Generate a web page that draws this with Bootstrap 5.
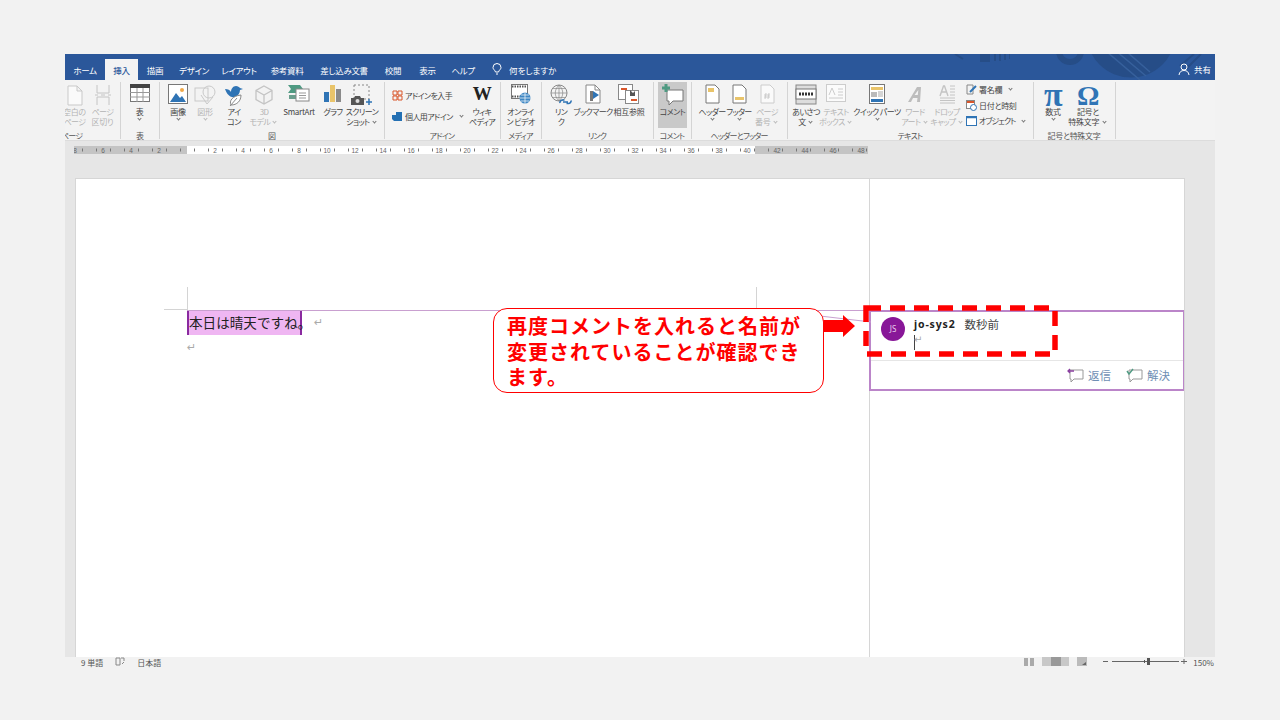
<!DOCTYPE html>
<html lang="ja">
<head>
<meta charset="utf-8">
<title>Word コメント</title>
<link href="https://cdn.jsdelivr.net/npm/bootstrap@5.3.0/dist/css/bootstrap.min.css" rel="stylesheet">
<style>
html,body{height:720px;overflow:hidden}
body{background:#f2f2f2;font-family:"Noto Sans CJK JP","Noto Sans",sans-serif;color:#444;font-feature-settings:"palt"}
svg{display:block;flex:none}
.wd-win{position:relative;width:1150px;height:614px;margin:54px 0 0 65px;overflow:hidden}
.wd-tabs{position:relative;height:26px;background:#2b579a;overflow:hidden}
.wd-deco{position:absolute;left:0;top:0}
.wd-tab{position:relative;height:21px;line-height:22px;font-size:8.5px;letter-spacing:-.35px;color:#fff;text-align:center;flex:none}
.wd-tab.on{background:#f3f3f3;color:#2b579a;font-weight:500}
.t40{width:40px}.t33{width:33px}.t34{width:34px}.t44{width:44px}.t46{width:46px}.t50{width:50px}.t64{width:64px}.t35{width:35px}.t36{width:36px}
.wd-help{padding-left:11px;gap:7px;letter-spacing:0}
.wd-share{position:relative;color:#fff;font-size:8.5px;height:21px;padding-right:4px}
.wd-ribbon{height:61px;background:#f3f3f3;padding-top:2px;border-bottom:1px solid #dcdcdc}
.rb-grp{height:57px;box-shadow:1px 0 0 #d4d4d4;flex:none;position:relative}
.rb-items{height:49px}
.rb-cap{height:8px;line-height:10px;font-size:8px;letter-spacing:-.8px;text-align:center;color:#555;white-space:nowrap}
.rb-it{flex:none;height:49px;font-size:8px;letter-spacing:-.6px;line-height:10px;white-space:nowrap;padding-top:2px;color:#444}
.rb-it .ic{height:23px;display:flex;justify-content:center;align-items:flex-start}
.kj,.rb-it .kj{letter-spacing:-.3px}
.kn2{letter-spacing:-.95px}
.off{color:#b4b4b4}
.chev{display:inline-block;width:3px;height:3px;border:solid #777;border-width:0 1px 1px 0;transform:rotate(45deg);margin:0 2px 2px}
.off .chev{border-color:#bbb}
.rb-row{font-size:8px;letter-spacing:-.6px;line-height:10px;white-space:nowrap;color:#444;gap:2px}
.rb-row .chev{margin-left:5px}
.g55{width:55px}.g39{width:39px}.g225{width:225px;padding-left:7px}.g116{width:116px;padding-left:8px}.g41{width:41px}.g112{width:112px;padding-left:8px}.g38{width:38px}.g96{width:96px;padding-left:7px}.g246{width:246px}.g82{width:82px;padding-left:7px}
.w12{width:12px}.w16{width:16px}.w22{width:22px}.w23{width:23px}.w24{width:24px}.w25{width:25px}.w26{width:26px}.w28{width:28px}.w29{width:29px}.w30{width:30px}.w32{width:32px}.w38{width:38px}.w39{width:39px}.w40{width:40px}.w41{width:41px}.w44{width:44px}.w60{width:60px}.w78{width:78px}.w67{width:67px}
.ml8{margin-left:8px}.ml3{margin-left:3px}.ml5{margin-left:5px}.mln2{margin-left:-2px}
.pg-clip{overflow:hidden}
.pg-cap{margin-left:-4px}
.rows-a{padding-top:8px;gap:10px}
.rows-b{padding-top:2px;gap:5px}
.cm-on{background:#c9c9c9;height:46px}
.wd-wiki{font:700 19px/20px "Liberation Serif",serif;color:#222}
.wd-sym{font:700 28px/24px "Liberation Serif",serif;color:#2f74b5}
.wd-pi{font-size:34px;line-height:22px}
.wd-doc{height:516px;background:#e6e6e6;overflow:hidden}
.wd-ruler{margin:4px 0 0 9px;height:10px}
.wd-ruler text{font:6.5px "Liberation Sans",sans-serif;fill:#666;text-anchor:middle}
.wd-page{margin:23px 0 0 10px;width:1110px;height:500px;background:#fff;border:1px solid #d6d6d6}
.wd-paper{width:793px;padding:132px 0 0 111px;position:relative;flex:none}
.crop-v,.crop-h{position:absolute;background:#d4d4d4}
.crop-v{width:1px;height:23px;top:108px}
.crop-h{height:1px;width:23px;top:130px;left:88px}
.crop-a{left:111px}.crop-b{left:680px}
.wd-rule{position:absolute;left:111px;right:0;top:131px;height:1px;background:#c9a0d0}
.wd-line{height:24px;line-height:24px;font-size:13.6px;color:#222;font-feature-settings:normal}
.wd-line2{line-height:20px}
.wd-hl{display:inline-block;background:#efb6f2;border:solid #8a2aa0;border-width:0 2px;width:115px;height:24px;white-space:nowrap;line-height:23px}
.wd-ret{color:#aaa;font-size:11px;font-family:"DejaVu Sans",sans-serif;line-height:inherit}
.ret-a{margin-left:12px}
.wd-margin{flex:1;border-left:1px solid #d6d6d6;padding-top:131px}
.cm-card{height:81px;margin-left:-1px;border:2px solid #bb85c9;border-right-width:1px}
.cm-top{height:49px;padding:5px 0 0 10px;border-bottom:1px solid #e6e6e6}
.cm-ava{width:24px;height:24px;border-radius:50%;background:#881798;color:#e8cdec;font:8px/24px "Noto Sans",sans-serif;text-align:center;flex:none}
.cm-name{font:700 10.5px/15px "Noto Sans",sans-serif;color:#222;letter-spacing:.85px;margin-left:9px}
.cm-time{font-size:11.5px;line-height:15px;color:#444;margin-left:9px}
.cm-caret{width:1px;height:15px;background:#444;margin:3px 0 0 9px;position:relative}
.cm-caret span{position:absolute;left:0;top:-3px;color:#aaa;font:10px/15px "DejaVu Sans",sans-serif}
.cm-act{height:29px;padding-right:13px;color:#6f8fb4;font-size:11.5px;gap:15px}
.wd-status{height:12px;font-size:8px;line-height:12px;color:#555;overflow:hidden;padding-right:1px}
.st-gap{margin-left:12px}
.st-pct{margin-left:6px}
.st-on{background:#c8c8c8;width:27px;height:9px}
.note-box{position:absolute;left:428px;top:254px;width:331px;height:85px;background:#fff;border:1px solid #f00;border-radius:14px;padding:4px 0 0 13px;color:#f00;font:700 20px/25.500px "Noto Sans CJK JP",sans-serif;letter-spacing:1px;font-feature-settings:normal;white-space:nowrap}
.note-layer{position:absolute;left:0;top:0;pointer-events:none}
</style>
</head>
<body>
<div class="wd-win">
  <div class="wd-tabs d-flex align-items-end">
    <svg class="wd-deco" width="1150" height="26" fill="none">
      <circle cx="1066" cy="-21" r="44.6" fill="#264d87"/>
      <path d="M1035 -8l40 34M1045 -8l36 30M1055 -8l30 26" stroke="#36609c" stroke-width="1.5"/>
      <circle cx="1005" cy="-3" r="11" stroke="#264d87" stroke-width="6"/>
      <path d="M915 0h10v8h-10zM929 0h2v7h-2zM934 0h2v7h-2zM939 0h2v6h-2zM944 0h1v5h-1z" fill="#264d87"/>
      <path d="M890 0l8 5M1115 12l14-12M1122 14l14-14" stroke="#264d87" stroke-width="2"/>
    </svg>
    <div class="wd-tab t40">ホーム</div><div class="wd-tab t33 on">挿入</div><div class="wd-tab t34">描画</div><div class="wd-tab t44">デザイン</div><div class="wd-tab t46">レイアウト</div><div class="wd-tab t50">参考資料</div><div class="wd-tab t64">差し込み文書</div><div class="wd-tab t34">校閲</div><div class="wd-tab t35">表示</div><div class="wd-tab t36">ヘルプ</div>
    <div class="wd-tab wd-help d-flex align-items-center">
      <svg width="10" height="13" viewBox="0 0 10 13" fill="none" stroke="#fff"><path d="M3.5 9C3 7 1 6.500 1 4.500a4 4 0 0 1 8 0C9 6.500 7 7 6.500 9zM4 11h2"/></svg>
      <span>何をしますか</span>
    </div>
    <div class="wd-share ms-auto d-flex align-items-center gap-1">
      <svg width="12" height="13" viewBox="0 0 12 13" fill="none" stroke="#fff"><circle cx="6" cy="4" r="3"/><path d="M1 12c.5-3 2-4.500 5-4.500S10.500 9 11 12"/></svg><span>共有</span>
    </div>
  </div>

  <div class="wd-ribbon d-flex">
    <div class="rb-grp g55 pg-clip">
      <div class="rb-items d-flex mln2">
        <div class="rb-it w23 off d-flex flex-column align-items-center"><div class="ic"><svg width="18" height="22" viewBox="0 0 18 22" fill="#fafafa" stroke="#c9c9c9"><path d="M2 2h9l5 5v14H2zM11 2v5h5"/></svg></div><span class="kj">空白の</span><span>ページ</span></div>
        <div class="rb-it w25 ms-1 off d-flex flex-column align-items-center"><div class="ic"><svg width="18" height="22" viewBox="0 0 18 22" fill="none" stroke="#c4c4c4"><path d="M3 1v8h12V1M3 21v-8h12v8M1 11h3M7 11h4M14 11h3"/></svg></div><span>ページ</span><span class="kj">区切り</span></div>
      </div>
      <div class="rb-cap text-start pg-cap">ページ</div>
    </div>
    <div class="rb-grp g39">
      <div class="rb-items d-flex">
        <div class="rb-it w39 d-flex flex-column align-items-center"><div class="ic"><svg width="20" height="18" viewBox="0 0 20 18"><rect x=".5" y=".5" width="19" height="17" fill="#fff" stroke="#777"/><rect width="20" height="4" fill="#444"/><path d="M0 8.500h20M0 13h20M7 4v14M13 4v14" stroke="#999"/></svg></div><span>表</span><span class="chev"></span></div>
      </div>
      <div class="rb-cap">表</div>
    </div>
    <div class="rb-grp g225">
      <div class="rb-items d-flex">
        <div class="rb-it w24 d-flex flex-column align-items-center"><div class="ic"><svg width="20" height="20" viewBox="0 0 20 20"><rect x=".5" y=".5" width="19" height="19" fill="#fff" stroke="#777"/><circle cx="14" cy="6" r="2" fill="#f0a848"/><path d="M2 18l6-9 4 5 2-2 4 6z" fill="#2f74b5"/></svg></div><span class="kj">画像</span><span class="chev"></span></div>
        <div class="rb-it w30 off d-flex flex-column align-items-center"><div class="ic"><svg width="22" height="22" viewBox="0 0 22 22" fill="none" stroke="#c9c9c9"><rect x="1" y="4" width="13" height="13"/><circle cx="15" cy="8" r="6"/><path d="M7 11l6 9 6-7"/></svg></div><span class="kj">図形</span><span class="chev"></span></div>
        <div class="rb-it w28 d-flex flex-column align-items-center"><div class="ic"><svg width="20" height="22" viewBox="0 0 20 22"><path d="M1 5c3 0 5 1 6 3 0-3 2-6 5-6 2 0 3 1 4 2l3 1-3 1c0 3-2 6-5 7-4 1-8-2-10-8z" fill="#2f74b5"/><path d="M7 21c-2-4 1-9 10-10 0 6-4 10-10 10z" fill="#fff" stroke="#888"/><path d="M6 22l7-8" stroke="#888" fill="none"/></svg></div><span>アイ</span><span>コン</span></div>
        <div class="rb-it w32 off d-flex flex-column align-items-center"><div class="ic"><svg width="20" height="22" viewBox="0 0 20 22" fill="none" stroke="#c4c4c4" stroke-width="1.3"><path d="M10 2l8 4.500v9L10 20l-8-4.500v-9zM2 6.500l8 4.500 8-4.500M10 11v9"/></svg></div><span>3D</span><span>モデル <i class="chev"></i></span></div>
        <div class="rb-it w38 d-flex flex-column align-items-center"><div class="ic"><svg width="22" height="20" viewBox="0 0 22 20"><path d="M0 1h12l3 4-3 4H0l3-4z" fill="#4f9a82"/><path d="M1 11h9l2 2-2 2H1z" fill="#6a9f8e"/><rect x="8" y="5" width="13" height="12" fill="#fff" stroke="#888"/><path d="M11 9h7M11 11.500h7M11 14h7" stroke="#999"/></svg></div><span class="kj">SmartArt</span></div>
        <div class="rb-it w30 d-flex flex-column align-items-center"><div class="ic"><svg width="18" height="20" viewBox="0 0 18 20"><rect x="0" y="8" width="5" height="10" fill="#2f74b5"/><rect x="6" y="1" width="5" height="17" fill="#e9c46a"/><rect x="12" y="5" width="5" height="13" fill="#8a8a8a"/></svg></div><span>グラフ</span></div>
        <div class="rb-it w28 d-flex flex-column align-items-center"><div class="ic"><svg width="22" height="22" viewBox="0 0 22 22" fill="none"><rect x="3" y="1" width="15" height="14" stroke="#888" stroke-dasharray="2 2"/><path d="M0 14h3l1-2h5l1 2h3v7H0z" fill="#555"/><circle cx="6.500" cy="17" r="2" fill="#ddd"/><path d="M18 15v6M15 18h6" stroke="#2f74b5" stroke-width="1.500"/></svg></div><span>スクリーン</span><span>ショット <i class="chev"></i></span></div>
      </div>
      <div class="rb-cap" style="margin-left:-7px">図</div>
    </div>
    <div class="rb-grp g116">
      <div class="rb-items d-flex">
        <div class="w78 d-flex flex-column flex-none rows-a">
          <div class="rb-row d-flex align-items-center"><svg width="11" height="11" viewBox="0 0 11 11" fill="none" stroke="#d9562b"><path d="M1 1h4v4H1zM6 1h4v4H6zM1 6h4v4H1zM6 6h4v4H6z"/></svg><span>アドインを入手</span></div>
          <div class="rb-row d-flex align-items-center"><svg width="11" height="11" viewBox="0 0 11 11" fill="#2470b3"><path d="M0 4h4V1h6v9H2l-2-2z"/></svg><span>個人用アドイン</span><span class="chev"></span></div>
        </div>
        <div class="rb-it w24 d-flex flex-column align-items-center"><div class="ic"><span class="wd-wiki">W</span></div><span>ウィキ</span><span>ペディア</span></div>
      </div>
      <div class="rb-cap" style="margin-left:-8px">アドイン</div>
    </div>
    <div class="rb-grp g41">
      <div class="rb-items d-flex">
        <div class="rb-it w41 d-flex flex-column align-items-center"><div class="ic"><svg width="20" height="20" viewBox="0 0 20 20"><rect x=".5" y=".5" width="16" height="14" fill="#fff" stroke="#777"/><path d="M1 2.500h15M1 12.500h15" stroke="#555" stroke-width="2" stroke-dasharray="1.500 1"/><circle cx="14" cy="14" r="5.500" fill="#3f87c4"/><path d="M8.500 14h11M14 8.500v11M10 11h8M10 17h8" stroke="#fff" stroke-width=".7"/></svg></div><span>オンライ</span><span>ン ビデオ</span></div>
      </div>
      <div class="rb-cap">メディア</div>
    </div>
    <div class="rb-grp g112">
      <div class="rb-items d-flex">
        <div class="rb-it w24 d-flex flex-column align-items-center"><div class="ic"><svg width="22" height="23" viewBox="0 0 22 23" fill="none"><circle cx="9" cy="9" r="8" stroke="#888"/><path d="M1 9h16M9 1v16M3 4.500h12M3 13.500h12M9 1c-5 5-5 11 0 16M9 1c5 5 5 11 0 16" stroke="#888" stroke-width=".7"/><path d="M10 19a2.500 2.500 0 0 1 2.500-3h2M21 16.500a2.500 2.500 0 0 1-2.500 3h-2M13 18h5" stroke="#2f74b5" stroke-width="1.600"/></svg></div><span>リン</span><span>ク</span></div>
        <div class="rb-it w40 d-flex flex-column align-items-center"><div class="ic"><svg width="16" height="20" viewBox="0 0 16 20"><path d="M1 1h9l5 5v13H1z" fill="#fff" stroke="#888"/><path d="M10 1v5h5" fill="none" stroke="#888"/><path d="M8 7l6 4-6 4z" fill="#2f74b5"/><rect x="5" y="7" width="3" height="10" fill="#777"/></svg></div><span>ブックマーク</span></div>
        <div class="rb-it w32 d-flex flex-column align-items-center"><div class="ic"><svg width="22" height="20" viewBox="0 0 22 20"><rect x=".5" y=".5" width="14" height="15" fill="#fff" stroke="#888"/><rect x="7.500" y="6.500" width="13" height="13" fill="#fff" stroke="#888"/><rect x="3" y="4" width="6" height="2" fill="#d9562b"/><rect x="13" y="15" width="6" height="2" fill="#d9562b"/><path d="M12 6l3 3 2-2v5h-5z" fill="#555"/></svg></div><span class="kj">相互参照</span></div>
      </div>
      <div class="rb-cap" style="margin-left:-8px">リンク</div>
    </div>
    <div class="rb-grp g38">
      <div class="rb-items d-flex">
        <div class="rb-it w29 ml5 cm-on d-flex flex-column align-items-center"><div class="ic"><svg width="22" height="22" viewBox="0 0 22 22"><path d="M5 6h16v11H11l-4 4v-4H5z" fill="#fff" stroke="#777"/><path d="M0 4h8M4 0v8" stroke="#4f9a82" stroke-width="3"/></svg></div><span>コメント</span></div>
      </div>
      <div class="rb-cap">コメント</div>
    </div>
    <div class="rb-grp g96">
      <div class="rb-items d-flex">
        <div class="rb-it w28 d-flex flex-column align-items-center"><div class="ic"><svg width="15" height="20" viewBox="0 0 15 20"><path d="M1 1h9l4 4v14H1z" fill="#fff" stroke="#777"/><rect x="3" y="4" width="6" height="4" fill="#e9c46a"/></svg></div><span>ヘッダー</span><span class="chev"></span></div>
        <div class="rb-it w26 d-flex flex-column align-items-center"><div class="ic"><svg width="15" height="20" viewBox="0 0 15 20"><path d="M1 1h9l4 4v14H1z" fill="#fff" stroke="#777"/><rect x="3" y="13" width="9" height="3" fill="#e9c46a"/></svg></div><span>フッター</span><span class="chev"></span></div>
        <div class="rb-it w30 off d-flex flex-column align-items-center"><div class="ic"><svg width="15" height="20" viewBox="0 0 15 20" fill="#fafafa" stroke="#ccc"><path d="M1 1h9l4 4v14H1z"/><path d="M6 9l-1 6M9 9l-1 6M4 11h6M4 13h6" fill="none"/></svg></div><span>ページ</span><span class="kj">番号 <i class="chev"></i></span></div>
      </div>
      <div class="rb-cap" style="margin-left:-7px">ヘッダーとフッター</div>
    </div>
    <div class="rb-grp g246">
      <div class="rb-items d-flex">
        <div class="rb-it w38 d-flex flex-column align-items-center"><div class="ic"><svg width="22" height="21" viewBox="0 0 22 21"><rect x="1" y="1" width="20" height="19" fill="#ddd" stroke="#888"/><rect x="1" y="5" width="20" height="10" fill="#fff" stroke="#777"/><path d="M4 10h14" stroke="#333" stroke-width="3" stroke-dasharray="2 1"/></svg></div><span>あいさつ</span><span>文 <i class="chev"></i></span></div>
        <div class="rb-it w22 off d-flex flex-column align-items-center"><div class="ic"><svg width="20" height="18" viewBox="0 0 20 18" fill="#fbfbfb" stroke="#ccc"><rect x=".5" y=".5" width="19" height="17"/><path d="M12 5h5M12 8h5M12 11h5M3 14h14M3 11l3-7 3 7" fill="none"/></svg></div><span>テキスト</span><span>ボックス <i class="chev"></i></span></div>
        <div class="rb-it w60 d-flex flex-column align-items-center"><div class="ic"><svg width="16" height="20" viewBox="0 0 16 20"><rect x=".5" y=".5" width="15" height="19" fill="#fff" stroke="#777"/><rect x="2" y="3" width="12" height="3" fill="#e9c46a"/><rect x="2" y="8" width="6" height="5" fill="#bbb"/><path d="M9 8h5M9 10h5M9 12h5" stroke="#aaa"/><rect x="2" y="15" width="12" height="3" fill="#2f74b5"/></svg></div><span>クイック パーツ</span><span class="chev"></span></div>
        <div class="rb-it w16 off d-flex flex-column align-items-center"><div class="ic"><svg width="16" height="20" viewBox="0 0 16 20"><path d="M1 18L10 3h4l-1 15h-3l.5-4H6l-2 4zM7.500 11h3.300l.5-5z" fill="#bdbdbd" fill-rule="evenodd"/></svg></div><span>ワード</span><span>アート <i class="chev"></i></span></div>
        <div class="rb-it w32 ml8 off d-flex flex-column align-items-center"><div class="ic"><svg width="16" height="20" viewBox="0 0 16 20" fill="none" stroke="#c4c4c4"><path d="M1 12l3.500-10h1L9 12M2.500 8h5" stroke-width="1.400"/><path d="M11 2h5M11 5h5M11 8h5M11 11h5M1 14h15M1 16.500h15M1 19h15"/></svg></div><span>ドロップ</span><span>キャップ <i class="chev"></i></span></div>
        <div class="w67 ml3 d-flex flex-column rows-b">
          <div class="rb-row d-flex align-items-center"><svg width="11" height="11" viewBox="0 0 11 11" fill="none"><path d="M1 1h6v9H1z" stroke="#888"/><path d="M4 8l6-6" stroke="#2f74b5" stroke-width="2"/></svg><span class="kj">署名欄</span><span class="chev"></span></div>
          <div class="rb-row d-flex align-items-center"><svg width="11" height="11" viewBox="0 0 11 11" fill="none"><rect x=".5" y=".5" width="8" height="8" fill="#fff" stroke="#888"/><path d="M1 2h7" stroke="#d9562b" stroke-width="2"/><circle cx="7.500" cy="7.500" r="3" fill="#fff" stroke="#2f74b5"/></svg><span class="kj">日付と時刻</span></div>
          <div class="rb-row d-flex align-items-center"><svg width="11" height="10" viewBox="0 0 11 10" fill="#fff" stroke="#2f74b5"><rect x=".5" y=".5" width="10" height="9"/><path d="M1 1.500h9" stroke-width="1.500"/></svg><span class="kn2">オブジェクト</span><span class="chev"></span></div>
        </div>
      </div>
      <div class="rb-cap">テキスト</div>
    </div>
    <div class="rb-grp g82">
      <div class="rb-items d-flex">
        <div class="rb-it w26 d-flex flex-column align-items-center"><div class="ic"><span class="wd-sym wd-pi">π</span></div><span class="kj">数式</span><span class="chev"></span></div>
        <div class="rb-it w44 d-flex flex-column align-items-center"><div class="ic"><span class="wd-sym">Ω</span></div><span class="kj">記号と</span><span class="kj">特殊文字 <i class="chev"></i></span></div>
      </div>
      <div class="rb-cap kj" style="margin-left:-7px">記号と特殊文字</div>
    </div>
  </div>

  <div class="wd-doc">
    <div class="wd-ruler">
      <svg width="796" height="10" viewBox="0 0 796 10">
        <rect y="1" width="794" height="8" fill="#c4c4c4"/>
        <rect x="113" y="1" width="568" height="8" fill="#fff"/>
        <line x1="0" x2="794" y1="5" y2="5" stroke="#777" stroke-width="3" stroke-dasharray="1 13" stroke-dashoffset="-8"/>
        <text x="1" y="7.500">8</text><text x="29" y="7.500">6</text><text x="57" y="7.500">4</text><text x="85" y="7.500">2</text>
        <text x="141" y="7.500">2</text><text x="169" y="7.500">4</text><text x="197" y="7.500">6</text><text x="225" y="7.500">8</text><text x="253" y="7.500">10</text><text x="281" y="7.500">12</text><text x="309" y="7.500">14</text><text x="337" y="7.500">16</text><text x="365" y="7.500">18</text><text x="393" y="7.500">20</text><text x="421" y="7.500">22</text><text x="449" y="7.500">24</text><text x="477" y="7.500">26</text><text x="505" y="7.500">28</text><text x="533" y="7.500">30</text><text x="561" y="7.500">32</text><text x="589" y="7.500">34</text><text x="617" y="7.500">36</text><text x="645" y="7.500">38</text><text x="673" y="7.500">40</text><text x="703" y="7.500">42</text><text x="731" y="7.500">44</text><text x="759" y="7.500">46</text><text x="787" y="7.500">48</text>
      </svg>
    </div>
    <div class="wd-page d-flex">
      <div class="wd-paper">
        <div class="crop-v crop-a"></div><div class="crop-v crop-b"></div><div class="crop-h"></div><div class="wd-rule"></div>
        <div class="wd-line d-flex align-items-center"><span class="wd-hl">本日は晴天ですね。</span><span class="wd-ret ret-a">↵</span></div>
        <div class="wd-line wd-line2"><span class="wd-ret">↵</span></div>
      </div>
      <div class="wd-margin">
        <div class="cm-card">
          <div class="cm-top d-flex">
            <div class="cm-ava">JS</div>
            <div class="d-flex flex-column">
              <div class="d-flex"><span class="cm-name">jo-sys2</span><span class="cm-time">数秒前</span></div>
              <div class="cm-caret"><span>↵</span></div>
            </div>
          </div>
          <div class="cm-act d-flex align-items-center justify-content-end">
            <div class="d-flex align-items-center gap-1"><svg width="17" height="15" viewBox="0 0 17 15" fill="none"><path d="M3 2h13v9H7l-3 3v-3H3z" stroke="#999"/><path d="M1 3h6M3 1L1 3l2 2" stroke="#8a3fa0" stroke-width="1.300"/></svg><span>返信</span></div>
            <div class="d-flex align-items-center gap-1"><svg width="17" height="15" viewBox="0 0 17 15" fill="none"><path d="M3 2h13v9H7l-3 3v-3H3z" stroke="#999"/><path d="M1 3l2 3 4-5" stroke="#4f9a82" stroke-width="1.400"/></svg><span>解決</span></div>
          </div>
        </div>
      </div>
    </div>
  </div>

  <div class="wd-status d-flex align-items-start">
    <span class="ms-3">9 単語</span>
    <svg class="st-gap" width="10" height="9" viewBox="0 0 10 9" fill="none" stroke="#888"><path d="M1 1h4v7H1zM6 1h3v3M7 7l2-2"/></svg>
    <span class="st-gap">日本語</span>
    <div class="ms-auto d-flex align-items-start">
      <svg width="10" height="9" viewBox="0 0 10 9"><path d="M0 1h4v8H0zM6 1h4v8H6z" fill="#aaa"/></svg>
      <div class="st-on ms-2 d-flex justify-content-center"><svg width="10" height="9" viewBox="0 0 10 9"><rect width="10" height="9" fill="#999"/></svg></div>
      <svg class="ms-2" width="10" height="9" viewBox="0 0 10 9"><rect width="10" height="9" fill="#bbb"/><path d="M5 8l4-3v3z" fill="#666"/></svg>
      <svg class="ms-3" width="84" height="9" viewBox="0 0 84 9"><path d="M0 4.500h5M9 4.500h67M78 4.500h6M81 2v5" stroke="#666"/><rect x="44" y="1" width="3" height="7" fill="#555"/><rect x="41" y="3" width="1" height="3" fill="#555"/></svg>
      <span class="st-pct">150%</span>
    </div>
  </div>

  <svg class="note-layer" width="1150" height="614" fill="none">
    <path d="M755 262L806 268" stroke="#c9a0d0"/>
    <polygon points="758,266 778,266 778,261 790,272 778,283 778,278 758,278" fill="#f00"/>
    <rect x="801" y="254" width="189" height="46" stroke="#f00" stroke-width="5.500" stroke-dasharray="15 9"/>
  </svg>
  <div class="note-box">再度コメントを入れると名前が<br>変更されていることが確認でき<br>ます。</div>
</div>
</body>
</html>
